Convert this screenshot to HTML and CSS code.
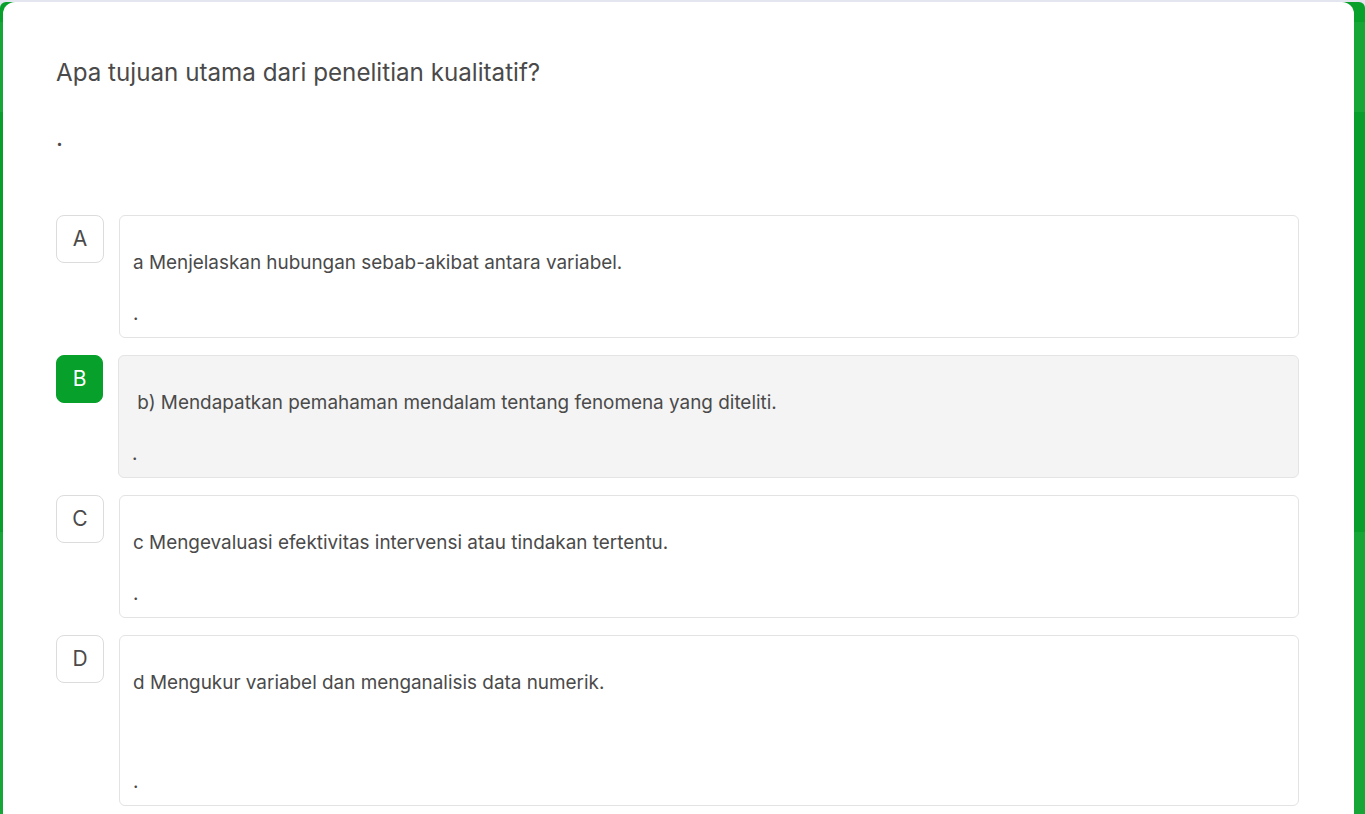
FILE: index.html
```html
<!DOCTYPE html>
<html lang="id">
<head>
<meta charset="utf-8">
<title>Soal</title>
<link rel="stylesheet" href="styles.css">
</head>
<body>
<div class="topstrip"></div>
<div class="frame">
  <div class="card">
    <div class="question">
      <p class="q-text">Apa tujuan utama dari penelitian kualitatif?</p>
      <p class="q-dot">.</p>
    </div>
    <div class="options">
      <div class="option">
        <div class="badge">A</div>
        <div class="answer">
          <p class="a-text">a Menjelaskan hubungan sebab-akibat antara variabel.</p>
          <p class="a-dot">.</p>
        </div>
      </div>
      <div class="option selected">
        <div class="badge">B</div>
        <div class="answer">
          <p class="a-text">&nbsp;b) Mendapatkan pemahaman mendalam tentang fenomena yang diteliti.</p>
          <p class="a-dot">.</p>
        </div>
      </div>
      <div class="option">
        <div class="badge">C</div>
        <div class="answer">
          <p class="a-text">c Mengevaluasi efektivitas intervensi atau tindakan tertentu.</p>
          <p class="a-dot">.</p>
        </div>
      </div>
      <div class="option">
        <div class="badge">D</div>
        <div class="answer tall">
          <p class="a-text">d Mengukur variabel dan menganalisis data numerik.</p>
          <p class="a-dot">.</p>
        </div>
      </div>
    </div>
  </div>
</div>
</body>
</html>
```

FILE: styles.css
```css
* { box-sizing: border-box; }
html, body {
  margin: 0;
  padding: 0;
  height: 100%;
  overflow: hidden;
}
body {
  background: #e3e5ef;
  font-family: Inter, "Noto Sans", "Liberation Sans", sans-serif;
  color: #4a4a4a;
}
.topstrip {
  height: 2px;
}
.frame {
  height: 812px;
  padding: 0 11px 0 3px;
  background: linear-gradient(to bottom, #07a02b 0, #07a02b 20px, #16a537 20px, #16a537 110px, #079e2b 110px, #079e2b 530px, #16a537 530px);
  border-radius: 6px 6px 0 0;
}
.card {
  height: 100%;
  background: #fff;
  border-radius: 12px 12px 0 0;
  padding: 56px 55px 0 53px;
}
.question p {
  margin: 0;
  font-size: 24.2px;
  line-height: 30px;
  color: #4a4a4a;
}
.question .q-dot {
  margin-top: 35px;
}
.options {
  margin-top: 62px;
  display: flex;
  flex-direction: column;
  gap: 17px;
}
.option {
  display: flex;
  align-items: flex-start;
  gap: 15px;
}
.badge {
  flex: 0 0 48px;
  width: 48px;
  height: 48px;
  border: 1px solid #dcdcdc;
  border-radius: 8px;
  background: #fff;
  display: flex;
  justify-content: center;
  padding-top: 10px;
  font-size: 21px;
  line-height: 26px;
  color: #4a4a4a;
}
.answer {
  flex: 1;
  border: 1px solid #e3e3e3;
  border-radius: 6px;
  background: #fff;
  padding: 35px 13px 11px;
}
.answer p {
  margin: 0;
  font-size: 18.9px;
  line-height: 24px;
  color: #4a4a4a;
}
.answer .a-dot {
  margin-top: 27px;
}
.answer.tall .a-dot {
  margin-top: 75px;
}
.selected .badge {
  background: #06a02a;
  border-color: #06a02a;
  color: #fff;
  flex-basis: 47px;
  width: 47px;
}
.selected .answer {
  background: #f4f4f4;
  border-color: #e4e4e4;
}
```
